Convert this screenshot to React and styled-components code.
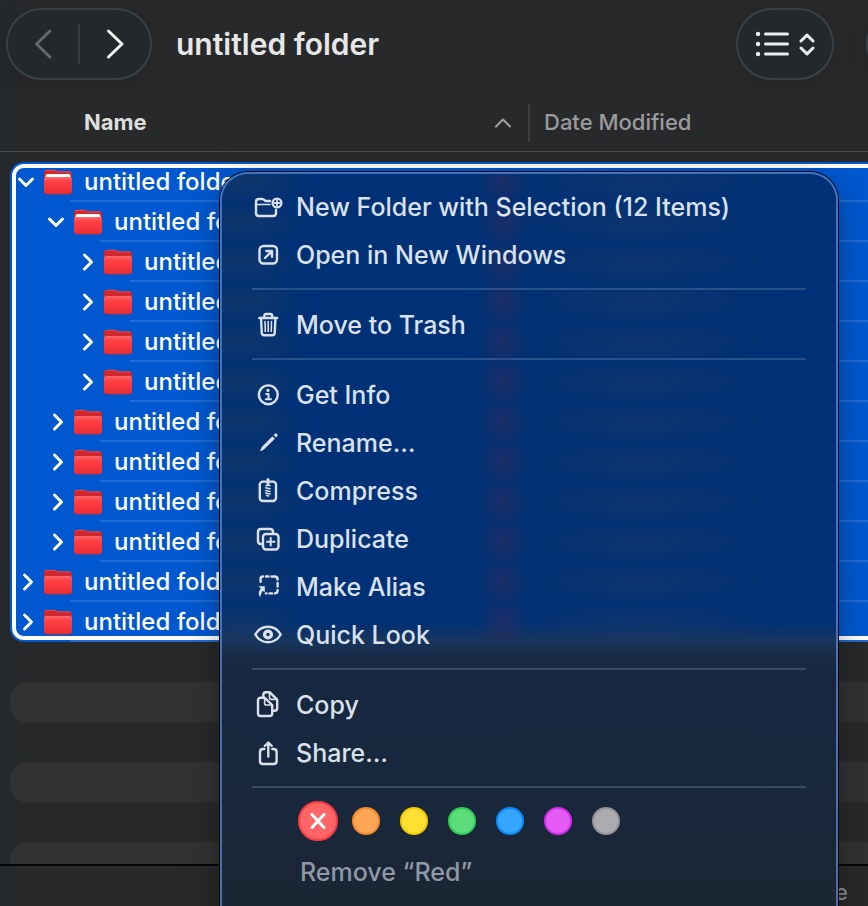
// libraries
import { useState } from "react"
import styled, { createGlobalStyle } from "styled-components"


// variables
const rowHeight = 40
const indentStep = 30
const windowColor = "#28292b"
const selectionColor = "#0058d0"
const menuTextColor = "#dbe1ea"

const folders = [
    { id: 1, depth: 0, open: true },
    { id: 2, depth: 1, open: true },
    { id: 3, depth: 2 },
    { id: 4, depth: 2 },
    { id: 5, depth: 2 },
    { id: 6, depth: 2 },
    { id: 7, depth: 1 },
    { id: 8, depth: 1 },
    { id: 9, depth: 1 },
    { id: 10, depth: 1 },
    { id: 11, depth: 0 },
    { id: 12, depth: 0 },
]

const emptyRows = [1, 2, 3, 4, 5, 6]

const tags = [
    { name: "Red", fill: "#ff6467", border: "#ff3b40" },
    { name: "Orange", fill: "#ffa656", border: "#f58a26" },
    { name: "Yellow", fill: "#ffdf33", border: "#f3ca00" },
    { name: "Green", fill: "#5bdc78", border: "#2fcc54" },
    { name: "Blue", fill: "#36a5ff", border: "#0a8bff" },
    { name: "Purple", fill: "#e45cf5", border: "#d32ceb" },
    { name: "Gray", fill: "#acabb0", border: "#939298" },
]

const menuGroups = [
    [
        { icon: "newFolder", text: "New Folder with Selection (12 Items)" },
        { icon: "open", text: "Open in New Windows" },
    ],
    [
        { icon: "trash", text: "Move to Trash" },
    ],
    [
        { icon: "info", text: "Get Info" },
        { icon: "rename", text: "Rename…" },
        { icon: "compress", text: "Compress" },
        { icon: "duplicate", text: "Duplicate" },
        { icon: "alias", text: "Make Alias" },
        { icon: "look", text: "Quick Look" },
    ],
    [
        { icon: "copy", text: "Copy" },
        { icon: "share", text: "Share…" },
    ],
]

const menuIcons = {
    newFolder: (
        <>
            <path d="M18 10H13.5L11.8 8.6Q11 8 10 8H7Q4 8 4 11V22Q4 25 7 25H21Q24 25 24 22V19" />
            <path d="M4 13.5H18" strokeWidth="1.6" />
            <circle cx="25" cy="12" r="4.4" />
            <path d="M25 9.6V14.4M22.6 12H27.4" strokeWidth="1.8" />
        </>
    ),
    open: (
        <>
            <rect x="7.5" y="7" width="17.5" height="17.5" rx="4" />
            <path d="M13 19L19.5 12.5M14.3 12H20V17.7" />
        </>
    ),
    trash: (
        <>
            <path d="M7.3 9H25.2M12.3 9V6.8Q12.3 5 14.1 5H18.4Q20.2 5 20.2 6.8V9" />
            <path d="M9 9L9.8 24Q9.9 26.2 12 26.2H20.5Q22.6 26.2 22.7 24L23.5 9" />
            <path d="M13 12.5L13.3 22.5M16.2 12.5V22.5M19.5 12.5L19.2 22.5" strokeWidth="1.6" />
        </>
    ),
    info: (
        <>
            <circle cx="16.3" cy="15.8" r="9.4" />
            <circle cx="16" cy="11.4" r="1.6" fill="currentColor" stroke="none" />
            <path d="M14.2 15H16.5V20M13.8 20.2H19" strokeWidth="2" />
        </>
    ),
    rename: (
        <g fill="currentColor" stroke="none">
            <path d="M20.4 9.2L22.9 11.7L11.9 22.6L8.6 24.2Q8 24.4 8.3 23.6L9.8 20Z" />
            <path d="M21.6 8L23.2 6.5Q24 6 24.8 6.8L25.3 7.3Q26 8.2 25.4 9L24 10.5Z" />
        </g>
    ),
    compress: (
        <>
            <rect x="7.8" y="6.6" width="16.2" height="19.4" rx="3" />
            <path d="M16 4.6V8.5" strokeWidth="3" />
            <path d="M14 10.6H18M13.6 12.8L18 13.8M13.6 15.4L18 16.4M13.6 18L18 19M14.4 20.4L16.6 21" strokeWidth="1.5" />
        </>
    ),
    duplicate: (
        <>
            <path d="M10.5 21H9Q6 21 6 18V9Q6 6 9 6H18Q21 6 21 9V10.5" />
            <rect x="11" y="11" width="15.5" height="15.5" rx="3" />
            <path d="M18.7 15V22.5M15 18.7H22.5" strokeWidth="2" />
        </>
    ),
    alias: (
        <>
            <path d="M8.6 10.8V8Q8.6 5.5 11 5.5M14 5.5H16.4M19.4 5.5H22.5Q25.6 5.5 25.6 8.500M25.6 12V15.5M25.6 19V19.5Q25.6 22.4 22.8 22.4M20 22.4H17.5" />
            <path d="M6.5 15.3H12.8V21.6L10.9 19.7Q8.6 21.8 8.2 26.2Q5 22.5 8.8 17.6Z" fill="currentColor" stroke="none" />
            <path d="M14 22.4H14.5" />
        </>
    ),
    look: (
        <>
            <path d="M3.3 15.5C6 10.8 10.7 7.8 16 7.8S26 10.8 28.7 15.5C26 20.2 21.3 23.2 16 23.2S6 20.2 3.3 15.5Z" />
            <circle cx="16" cy="15.5" r="3.4" strokeWidth="3.4" />
        </>
    ),
    copy: (
        <>
            <path d="M11.3 8V6Q11.3 3.3 14 3.3H17.8L25.2 10.6V19Q25.2 21.8 22.4 21.8H21" />
            <path d="M17.5 4V8.6Q17.5 10.4 19.3 10.4H24.5" strokeWidth="1.6" />
            <path d="M8.8 8.8H12.8L20.2 16V24.4Q20.2 27 17.6 27H8.6Q6 27 6 24.4V11.4Q6 8.8 8.8 8.8Z" />
            <path d="M12.6 9.4V14.2Q12.6 16 14.4 16H19.4" strokeWidth="1.6" />
        </>
    ),
    share: (
        <>
            <path d="M12.3 12H11Q8 12 8 15V24Q8 27 11 27H21.6Q24.6 27 24.6 24V15Q24.6 12 21.6 12H20.3" />
            <path d="M16.3 19.5V6M12.8 9L16.3 5.5L19.8 9" />
        </>
    ),
}

function FolderIcon({ open }) {
    return (
        <svg width="28" height="26" viewBox="0 0 28 26" aria-hidden="true">
            <defs>
                <linearGradient id="folderFront" x1="0" y1="0" x2="0" y2="1">
                    <stop offset="0" stopColor="#ff6a6c" />
                    <stop offset="0.25" stopColor="#ff4145" />
                    <stop offset="0.6" stopColor="#fa373c" />
                    <stop offset="1" stopColor="#e82f35" />
                </linearGradient>
            </defs>
            <path d="M0 4Q0 1 3 1H10Q11.5 1 12.5 1.8Q13.4 2.6 15 2.6H25.5Q28 2.6 28 5V14H0Z" fill="#d0262e" />
            <path d="M1 2.2Q2 1.3 3 1.3H10Q11.5 1.3 12.5 2.1Q13.4 2.9 15 2.9H26" fill="none" stroke="#f0494e" strokeWidth="1" />
            {open && <path d="M1.5 8Q1.5 5 3.5 5H24.5Q26.5 5 26.5 8V10H1.5Z" fill="#fff" />}
            <path
                d={open
                    ? "M0 10.5Q0 8 2.5 8H25.5Q28 8 28 10.5V22.5Q28 25 25.5 25H2.5Q0 25 0 22.5Z"
                    : "M0 9.5Q0 7 2.5 7H25.5Q28 7 28 9.5V22.5Q28 25 25.5 25H2.5Q0 25 0 22.5Z"}
                fill="url(#folderFront)"
            />
            <path d="M1 24Q1.6 25 3 25H25Q26.5 25 27 24" fill="none" stroke="#bd2a3a" strokeWidth="1" />
        </svg>
    )
}

function FolderRow({ folder }) {
    const [open, setOpen] = useState(Boolean(folder.open))

    return (
        <Row>
            <Disclosure
                $depth={folder.depth}
                aria-label="Toggle folder"
                aria-expanded={open}
                onClick={() => setOpen(!open)}
            >
                <svg width="22" height="22" viewBox="0 0 22 22">
                    <path d={open ? "M3.5 8L10 14.5L16.5 8" : "M8.5 4L15.5 11L8.5 18"} />
                </svg>
            </Disclosure>
            <RowContent>
                <FolderIcon open={open} />
                <FolderName>untitled folder</FolderName>
            </RowContent>
        </Row>
    )
}

function ContextMenu() {
    return (
        <Menu role="menu">
            {menuGroups.map((group, i) => (
                <MenuGroup key={i}>
                    {group.map(item => (
                        <MenuItem key={item.text} role="menuitem">
                            <MenuIcon viewBox="0 0 32 32" aria-hidden="true">{menuIcons[item.icon]}</MenuIcon>
                            <span>{item.text}</span>
                        </MenuItem>
                    ))}
                </MenuGroup>
            ))}
            <Tags>
                {tags.map((tag, i) => (
                    <TagButton key={tag.name} aria-label={tag.name}>
                        <TagDot $tag={tag} $selected={i === 0}>
                            {i === 0 && (
                                <svg width="16" height="16" viewBox="0 0 16 16">
                                    <path d="M2 1.5L14 14.5M14 1.5L2 14.5" />
                                </svg>
                            )}
                        </TagDot>
                    </TagButton>
                ))}
            </Tags>
            <TagCaption>Remove “Red”</TagCaption>
        </Menu>
    )
}

export default function App() {
    return (
        <>
            <GlobalStyle />
            <Window>
                <Toolbar>
                    <NavButtons>
                        <NavButton aria-label="Back" disabled>
                            <svg width="24" height="32" viewBox="0 0 24 32"><path d="M19 3L5.5 16L19 29" /></svg>
                        </NavButton>
                        <NavButton aria-label="Forward">
                            <svg width="24" height="32" viewBox="0 0 24 32"><path d="M5.5 3L19 16L5.5 29" /></svg>
                        </NavButton>
                    </NavButtons>
                    <Title>untitled folder</Title>
                    <ToolbarActions>
                        <ViewButton aria-label="View">
                            <svg width="60" height="32" viewBox="0 0 60 32">
                                <g fill="currentColor" stroke="none">
                                    <circle cx="3" cy="6" r="2.2" />
                                    <circle cx="3" cy="16" r="2.2" />
                                    <circle cx="3" cy="26" r="2.2" />
                                </g>
                                <path d="M10.5 6H32.5M10.5 16H32.5M10.5 26H32.5" />
                                <path d="M46 13L52 7.2L58 13M46 20L52 25.800L58 20" />
                            </svg>
                        </ViewButton>
                        <ViewButton aria-label="Group" />
                    </ToolbarActions>
                </Toolbar>

                <Columns>
                    <NameColumn>
                        <span>Name</span>
                        <svg width="16" height="10" viewBox="0 0 16 10"><path d="M1 8.5L8 1.5L15 8.5" /></svg>
                    </NameColumn>
                    <DateColumn>Date Modified</DateColumn>
                </Columns>

                <Files>
                    <Selection>
                        {folders.map(folder => <FolderRow key={folder.id} folder={folder} />)}
                    </Selection>
                    <EmptyRows>
                        {emptyRows.map(row => <EmptyRow key={row} />)}
                    </EmptyRows>
                </Files>

                <StatusBar>available</StatusBar>
                <ContextMenu />
            </Window>
        </>
    )
}

const GlobalStyle = createGlobalStyle`
    * {
        box-sizing: border-box;
    }
    body {
        margin: 0;
        background: ${windowColor};
        font-family: "Inter", "Liberation Sans", sans-serif;
    }
    button {
        padding: 0;
        border: none;
        background: none;
        color: inherit;
        font: inherit;
    }
    svg {
        flex-shrink: 0;
        fill: none;
        stroke-linecap: round;
        stroke-linejoin: round;
    }
`

const Window = styled.main`
    position: relative;
    display: flex;
    flex-direction: column;
    height: 100vh;
    overflow: hidden;
    background: linear-gradient(90deg, #25292b, ${windowColor} 40px);
`

const Toolbar = styled.header`
    display: flex;
    align-items: center;
    flex-shrink: 0;
    height: 88px;
    padding-left: 6px;
    overflow: hidden;
`

const glassPill = `
    height: 72px;
    border: 2px solid #3a4044;
    border-radius: 36px;
    background: #23282b;
    box-shadow: 0 4px 30px rgba(0, 0, 0, 0.1);
`

const NavButtons = styled.nav`
    display: flex;
    align-items: center;
    width: 146px;
    ${glassPill}
`

const NavButton = styled.button`
    display: flex;
    flex: 1;
    align-items: center;
    justify-content: center;
    height: 40px;
    color: ${props => props.disabled ? "#65686a" : "#f2f3f3"};
    & + & {
        border-left: 2px solid #3a3e41;
    }
    svg {
        stroke: currentColor;
        stroke-width: 3;
    }
`

const Title = styled.h1`
    margin: 0 0 0 24px;
    font-size: 30px;
    font-weight: 600;
    line-height: 40px;
    color: #e6e7e7;
`

const ToolbarActions = styled.div`
    display: flex;
    gap: 32px;
    margin: 0 -96px 0 auto;
`

const ViewButton = styled.button`
    display: flex;
    align-items: center;
    justify-content: center;
    width: 98px;
    color: #ececed;
    && {
        ${glassPill}
    }
    svg {
        stroke: currentColor;
        stroke-width: 3;
    }
`

const Columns = styled.div`
    display: flex;
    align-items: center;
    flex-shrink: 0;
    height: 64px;
    padding: 6px 0 0 84px;
    border-bottom: 1px solid #4b4c4e;
    font-size: 22px;
    line-height: 36px;
`

const NameColumn = styled.button`
    display: flex;
    align-items: center;
    justify-content: space-between;
    width: 446px;
    height: 38px;
    && {
        padding-right: 17px;
        border-right: 2px solid #3d3e40;
        font-weight: 700;
        color: #dcdddd;
    }
    span {
        padding-bottom: 2px;
    }
    svg {
        stroke: #a2a3a4;
        stroke-width: 2;
    }
`

const DateColumn = styled.button`
    && {
        margin-left: 14px;
        padding-bottom: 2px;
        font-weight: 500;
        color: #9a9b9c;
    }
`

const Files = styled.section`
    flex: 1;
    min-height: 0;
    padding: 10px 0 0 10px;
    overflow: hidden;
`

/* both lists run on past the right side of the window */
const Selection = styled.ul`
    position: relative;
    margin: 0 -40px 0 0;
    padding: 0;
    overflow: hidden;
    list-style: none;
    border-radius: 14px;
    background: ${selectionColor};
    &::after {
        content: "";
        position: absolute;
        inset: 2px;
        border: 4px solid #fff;
        border-radius: 12px;
        pointer-events: none;
    }
`

const Row = styled.li`
    display: flex;
    align-items: center;
    height: ${rowHeight}px;
    padding-left: 6px;
    font-size: 24px;
    font-weight: 500;
    color: #fff;
`

const Disclosure = styled.button`
    display: flex;
    width: 22px;
    margin-left: ${props => props.$depth * indentStep}px;
    svg {
        stroke: #fff;
        stroke-width: 3;
    }
`

const RowContent = styled.div`
    display: flex;
    flex: 1;
    align-items: center;
    gap: 12px;
    height: 100%;
    padding-left: 6px;
    white-space: nowrap;
    background: linear-gradient(rgba(255, 255, 255, 0.12), rgba(255, 255, 255, 0.12)) 32px 100% / 100% 2px no-repeat;
`

const FolderName = styled.span`
    padding-bottom: 2px;
`

const EmptyRows = styled.div`
    margin-right: -40px;
`

const EmptyRow = styled.div`
    height: ${rowHeight}px;
    border-radius: 16px;
    &:nth-child(even) {
        background: #313234;
    }
`

const StatusBar = styled.footer`
    flex-shrink: 0;
    height: 42px;
    padding: 14px 20px 0 0;
    border-top: 2px solid #060606;
    overflow: hidden;
    font-size: 22px;
    font-weight: 500;
    line-height: 24px;
    text-align: right;
    color: #8b8c8d;
`

const Menu = styled.div`
    position: absolute;
    top: 172px;
    left: 220px;
    width: 618px;
    padding: 9px 30px 80px;
    border: 2px solid rgba(100, 160, 235, 0.62);
    border-radius: 28px;
    background: linear-gradient(#003075 0, #003075 450px, #17355f 468px, #182a44 486px, #17273f 510px, #18283f 600px, #1b2634 720px) border-box;
    box-shadow: 0 0 0 1px #05070a, 0 10px 36px rgba(0, 0, 0, 0.32);
    font-size: 25px;
    font-weight: 500;
    line-height: 32px;
    color: ${menuTextColor};

    /* rows of the list showing faintly through the glass */
    &::before {
        content: "";
        position: absolute;
        inset: 0 0 auto;
        height: 466px;
        border-radius: 26px 26px 0 0;
        background:
            radial-gradient(ellipse 26px 30px at 281px 50%, rgba(110, 40, 70, 0.26), transparent) 0 -12px / 100% 40px repeat-y,
            radial-gradient(ellipse 140px 24px at 420px 50%, rgba(60, 70, 95, 0.24), transparent) 0 -12px / 100% 40px repeat-y,
            radial-gradient(ellipse 70px 24px at 20px 50%, rgba(60, 75, 85, 0.28), transparent) 0 -12px / 100% 40px repeat-y;
    }
`

const MenuGroup = styled.div`
    position: relative;
    padding-bottom: 9px;
    margin-bottom: 11px;
    border-bottom: 2px solid rgba(160, 180, 205, 0.25);
`

const MenuItem = styled.button`
    display: flex;
    align-items: center;
    gap: 12px;
    width: 100%;
    height: 48px;
    white-space: nowrap;
`

const MenuIcon = styled.svg`
    width: 32px;
    height: 32px;
    stroke: currentColor;
    stroke-width: 2.4;
`

const Tags = styled.div`
    display: flex;
    gap: 8px;
    padding: 2px 0 0 46px;
`

const TagButton = styled.button`
    display: flex;
    align-items: center;
    justify-content: center;
    width: 40px;
    height: 40px;
`

const TagDot = styled.span`
    display: flex;
    align-items: center;
    justify-content: center;
    width: ${props => props.$selected ? 40 : 28}px;
    height: ${props => props.$selected ? 40 : 28}px;
    border: 2px solid ${props => props.$tag.border};
    border-radius: 50%;
    background: ${props => props.$tag.fill};
    svg {
        stroke: #fff;
        stroke-width: 3;
    }
`

const TagCaption = styled.p`
    margin: 15px 0 0 48px;
    color: #8f98a5;
`
